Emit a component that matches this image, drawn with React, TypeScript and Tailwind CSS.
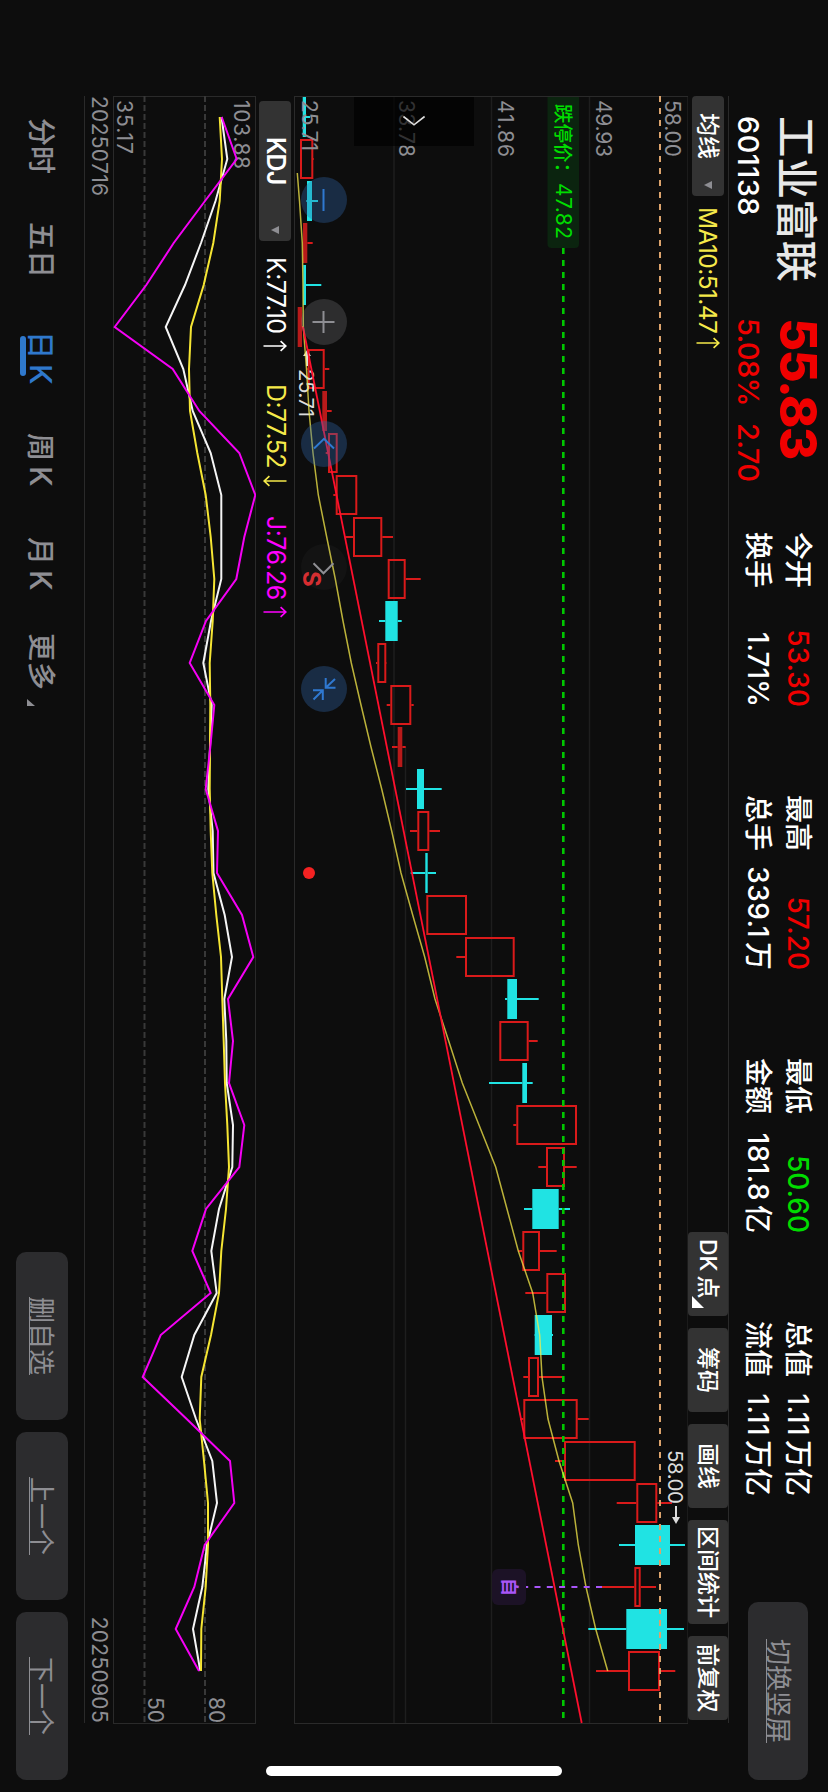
import React from "react";

type Candle = {
  kind: "up" | "down" | "flat";
  body: [number, number];
  wick: [number, number];
};

const STEP = 42;
const FIRST_X = 117;
const SCREEN_H = 828;

const candles: Candle[] = [
  { kind: "down", body: [302.7, 306], wick: [302.7, 310] },
  { kind: "up", body: [300, 313.3], wick: [300, 314] },
  { kind: "down", body: [307, 312], wick: [306.3, 318] },
  { kind: "flat", body: [303, 307.3], wick: [303, 312.7] },
  { kind: "down", body: [303.3, 306], wick: [303.3, 321.3] },
  { kind: "flat", body: [297.7, 302], wick: [297.7, 303] },
  { kind: "up", body: [307.7, 324.7], wick: [306.7, 329.3] },
  { kind: "flat", body: [322.3, 327], wick: [322.3, 331.7] },
  { kind: "up", body: [328, 337.7], wick: [325.7, 337.7] },
  { kind: "up", body: [335.7, 357.3], wick: [333.3, 357.3] },
  { kind: "up", body: [353, 382.3], wick: [345.3, 393] },
  { kind: "up", body: [387.7, 405.7], wick: [387.7, 420.7] },
  { kind: "down", body: [385.3, 397.7], wick: [379, 401.7] },
  { kind: "up", body: [377.3, 386.3], wick: [376, 386.7] },
  { kind: "up", body: [390.3, 411.3], wick: [386.7, 413.7] },
  { kind: "flat", body: [397.7, 402.3], wick: [392, 405.7] },
  { kind: "down", body: [417, 424], wick: [406, 441.7] },
  { kind: "up", body: [417.3, 429.3], wick: [410, 440] },
  { kind: "down", body: [425.3, 427.7], wick: [410.7, 436] },
  { kind: "up", body: [426.3, 467], wick: [426.3, 467] },
  { kind: "up", body: [465, 514.7], wick: [456.3, 514.7] },
  { kind: "down", body: [507.3, 517], wick: [505, 538.7] },
  { kind: "up", body: [499.3, 528.7], wick: [499.3, 537.7] },
  { kind: "down", body: [522.3, 527], wick: [489, 532.7] },
  { kind: "up", body: [516.3, 577], wick: [513.3, 577] },
  { kind: "up", body: [546, 565], wick: [538.3, 576.7] },
  { kind: "down", body: [532.3, 558.7], wick: [524, 570] },
  { kind: "up", body: [522.3, 540], wick: [518.3, 556.7] },
  { kind: "up", body: [546.3, 566], wick: [525.3, 566] },
  { kind: "down", body: [534.7, 552], wick: [534.3, 553] },
  { kind: "up", body: [528, 539], wick: [523.3, 563.3] },
  { kind: "up", body: [523.3, 577.7], wick: [520, 588.7] },
  { kind: "up", body: [564, 635.7], wick: [555, 635.7] },
  { kind: "up", body: [636.3, 657.3], wick: [616.7, 672] },
  { kind: "down", body: [635, 670], wick: [619, 685] },
  { kind: "up", body: [634.3, 640.7], wick: [601.7, 656] },
  { kind: "down", body: [626.3, 667], wick: [588.3, 684] },
  { kind: "up", body: [628, 660], wick: [596, 675.3] },
];

const ma10 = [
  299.5, 302.3, 303, 303.3, 306.5, 309, 313, 318.3, 326.7, 335.3, 343, 351.3, 361, 371, 381.7, 391.7, 401,
  412.7, 424.7, 435, 448.7, 462.3, 479, 495.7, 507, 518.3, 532.7, 539.7, 542, 548, 559, 572.7, 578.3, 586,
  595.7, 607.7,
];

const kLine = [
  221.5, 227.3, 215.5, 201, 185, 165.7, 183.3, 192.7, 210.7, 221.3, 221.3, 221.3, 211, 203.3, 211.7, 210,
  208.3, 212.7, 213.5, 224.7, 232, 224.3, 226.3, 226.7, 233, 232.3, 219, 211.3, 216.7, 194.3, 181.7, 196,
  212.3, 217, 207, 202.3, 193, 200.3,
];
const dLine = [
  219.7, 222, 219.7, 213.3, 203.7, 191, 189, 190, 197.3, 205.7, 210.7, 214.3, 212.7, 209.7, 210.3, 210,
  209.7, 210.7, 212.3, 216.3, 221, 222.3, 223.7, 225, 227.3, 229, 226, 221.3, 219, 211, 201.3, 199.7, 204,
  208, 208, 205.7, 201.3, 201,
];
const jLine = [
  221.7, 236.7, 205, 173.7, 146.3, 114.7, 172.7, 199.3, 239.3, 255.3, 244.3, 236.3, 206, 189.7, 214.3, 210.3,
  205.7, 218, 217, 242, 253.3, 228, 233, 229, 244.3, 239.3, 206, 192.3, 210.7, 160.7, 142.7, 186.7, 230,
  234.3, 204.7, 194.3, 175.7, 199,
];

const path = (values: number[], start = 0) =>
  values.map((v, i) => `${FIRST_X + STEP * (i + start)},${SCREEN_H - v}`).join(" ");

function CandleShape({ c, x }: { c: Candle; x: number }) {
  const color = c.kind === "down" ? "#20e3e3" : "#d91a1a";
  const top = SCREEN_H - c.body[1];
  const bottom = SCREEN_H - c.body[0];
  const high = SCREEN_H - c.wick[1];
  const low = SCREEN_H - c.wick[0];
  return (
    <g stroke={color} strokeWidth={2}>
      <line x1={x} x2={x} y1={high} y2={top} />
      <line x1={x} x2={x} y1={bottom} y2={low} />
      {c.kind === "up" ? (
        <rect x={x - 19} y={top + 1} width={38} height={bottom - top - 2} fill="none" />
      ) : (
        <rect
          x={x - 20}
          y={top}
          width={40}
          height={bottom - top}
          fill={c.kind === "flat" ? "#b81a1a" : color}
          stroke="none"
        />
      )}
    </g>
  );
}

function Arrow({ down = false, className }: { down?: boolean; className: string }) {
  return (
    <svg
      viewBox="0 0 12 24"
      className={`h-6 w-3 ${down ? "rotate-180" : ""} ${className}`}
      fill="none"
      stroke="currentColor"
      strokeWidth={1.7}
    >
      <path d="M6 23.5V1.2M1.2 6.4 6 1.2l4.8 5.2" />
    </svg>
  );
}

function Caret() {
  return (
    <svg viewBox="0 0 10 8" className="h-2 w-2.5 fill-[#8e8e93]">
      <path d="M1 0h8L5 8z" />
    </svg>
  );
}

function Stat({
  label,
  value,
  unit,
  color = "text-white",
}: {
  label: string;
  value: string;
  unit?: string;
  color?: string;
}) {
  return (
    <div className="flex h-10 items-center justify-between">
      <span className="text-[28px] font-medium">{label}</span>
      <span className={`flex text-[28px] font-medium ${color} ${unit ? "tracking-[0.4px]" : ""}`}>
        {value}
        {unit && <span className="ml-1 tracking-normal">{unit}</span>}
      </span>
    </div>
  );
}

function Header() {
  return (
    <header className="flex h-[99px] shrink-0 pl-[116px] leading-none text-white">
      <div className="flex w-[202px] flex-col pt-[9px]">
        <h1 className="h-[46px] text-[41.5px] leading-[46px] font-medium text-[#e8e8e8]">工业富联</h1>
        <span className="mt-[10px] text-[29px] leading-[30px] font-medium tracking-[0.4px]">601138</span>
      </div>
      <div className="flex w-[214px] flex-col pt-[5px] text-[#f00000]">
        <strong className="h-[50px] text-[51px] leading-[50px] font-extrabold tracking-[-1.7px]">55.83</strong>
        <div className="mt-[10px] flex gap-[17px] text-[29px] leading-[30px] font-medium tracking-[-0.6px]">
          <span>5.08%</span>
          <span>2.70</span>
        </div>
      </div>
      <div className="flex gap-[88px] pt-[10px]">
        <div className="w-[175px]">
          <Stat label="今开" value="53.30" color="text-[#f00000]" />
          <Stat label="换手" value="1.71%" />
        </div>
        <div className="w-[175px]">
          <Stat label="最高" value="57.20" color="text-[#f00000]" />
          <Stat label="总手" value="339.1" unit="万" />
        </div>
        <div className="w-[175px]">
          <Stat label="最低" value="50.60" color="text-[#00dc00]" />
          <Stat label="金额" value="181.8" unit="亿" />
        </div>
        <div className="w-[175px]">
          <Stat label="总值" value="1.11" unit="万亿" />
          <Stat label="流值" value="1.11" unit="万亿" />
        </div>
      </div>
      <button className="mt-5 mr-3 ml-auto h-[60px] w-[178px] rounded-[10px] bg-[#2c2c2e] text-[26px] text-[#8e8e93] underline decoration-1 underline-offset-2">
        切换竖屏
      </button>
    </header>
  );
}

function ToolButton({ children, className }: { children: React.ReactNode; className: string }) {
  return (
    <button className={`h-10 rounded-[4px] bg-[#333333] text-[23px] leading-10 font-medium text-white ${className}`}>
      {children}
    </button>
  );
}

function Toolbar() {
  return (
    <div className="mr-[69px] ml-24 flex h-[41px] shrink-0 items-center border-t border-[#2a2a2a]">
      <button className="flex h-8 w-[100px] items-center rounded-[4px] bg-[#333333] pr-1.5 pl-[17px] text-[23px] font-medium text-white">
        均线
        <span className="ml-auto">
          <Caret />
        </span>
      </button>
      <span className="ml-[11px] text-[24.5px] tracking-[-0.6px] text-[#f5e94a]">MA10:51.47</span>
      <Arrow className="ml-1 text-[#f5e94a]" />
      <div className="ml-auto flex gap-3 pr-[3px]">
        <ToolButton className="flex w-[84px] pl-[7px]">
          <span>DK</span>
          <span className="ml-1 -mr-0.5">点</span>
          <svg viewBox="0 0 12 12" className="mt-6 h-3 w-3 shrink-0 fill-white">
            <path d="M0 12h12V0z" />
          </svg>
        </ToolButton>
        <ToolButton className="w-[84px]">筹码</ToolButton>
        <ToolButton className="w-[84px]">画线</ToolButton>
        <ToolButton className="w-[104px]">区间统计</ToolButton>
        <ToolButton className="w-[84px]">前复权</ToolButton>
      </div>
    </div>
  );
}

const priceTicks: [string, number][] = [
  ["58.00", 163],
  ["49.93", 232],
  ["41.86", 330],
  ["33.78", 429],
  ["25.71", 526],
];

function ControlIcon({ d, className }: { d: string; className: string }) {
  return (
    <button className={`flex size-[46px] items-center justify-center rounded-full ${className}`}>
      <svg viewBox="-12 -12 24 24" className="size-6" fill="none" stroke="currentColor" strokeWidth={2}>
        <path d={d} />
      </svg>
    </button>
  );
}

function PriceChart() {
  return (
    <section className="relative ml-24 h-[394px] w-[1628px] shrink-0">
      <svg viewBox="96 140 1628 394" className="h-[394px] w-[1628px]">
        <g stroke="#1e1e1e" strokeWidth={1.5}>
          <line x1={96} x2={1723} y1={238.5} y2={238.5} />
          <line x1={96} x2={1723} y1={336.5} y2={336.5} />
          <line x1={96} x2={1723} y1={434} y2={434} />
          <line x1={747} x2={1723} y1={422.5} y2={422.5} />
        </g>
        <rect x={96.5} y={140} width={1627} height={393.5} fill="none" stroke="#2a2a2a" />
        {candles.map((c, i) => (
          <CandleShape key={i} c={c} x={FIRST_X + STEP * i} />
        ))}
        <g fill="#8e8e93" fontSize={21}>
          {priceTicks.map(([label, y]) => (
            <text key={label} x={100} y={y} textLength={label === "25.71" ? 51 : 57}>
              {label}
            </text>
          ))}
        </g>
        <g stroke="#dcdcdc" fill="#dcdcdc">
          <path d="M352 521h14" strokeWidth={2} />
          <path d="M350 521l6-4v8z" stroke="none" />
          <path d="M1506 152h12" strokeWidth={2} />
          <path d="M1524 152l-7-4v8z" stroke="none" />
        </g>
        <g fill="#dcdcdc" fontSize={20.5}>
          <text x={369} y={529} textLength={48}>25.71</text>
          <text x={1450} y={160} textLength={54}>58.00</text>
        </g>
        <line x1={96} x2={1723} y1={168} y2={168} stroke="#dca36c" strokeWidth={2} strokeDasharray="6 6" />
        <line x1={248} x2={1723} y1={264.7} y2={264.7} stroke="#00c800" strokeWidth={2.6} strokeDasharray="6 6" />
        <text x={571} y={525} fill="#d92b2e" fontSize={24} fontWeight={700}>S</text>
        <circle cx={873} cy={519} r={6} fill="#f42222" />
        <polyline points={`173,530.7 ${path(ma10, 2)}`} fill="none" stroke="#f5e94a" strokeOpacity={0.75} strokeWidth={1.5} />
        <line x1={327} y1={525} x2={1723} y2={246.3} stroke="#ff0f2d" strokeWidth={1.8} />
        <line x1={1587} x2={1587} y1={226} y2={302} stroke="#a855f7" strokeWidth={2} strokeDasharray="6 6.3" />
        <rect x={1569} y={302} width={36} height={34} rx={6} fill="#1c1226" />
        <text x={1578} y={325.5} fill="#a855f7" fontSize={18} fontWeight={700}>自</text>
        <path d="M97 249h147a4 4 0 0 1 4 4v23.500a4 4 0 0 1-4 4H97z" fill="#0b240f" />
        <g fill="#00dc00">
          <text x={104} y={272} fontSize={19.500} fontWeight={500}>跌停价：</text>
          <text x={183} y={272.5} fontSize={21} textLength={56}>47.82</text>
        </g>
      </svg>
      <div className="absolute top-[214px] left-px flex h-[120px] w-[49px] items-center justify-center bg-black/65">
        <svg viewBox="0 0 12 24" className="mr-[2px] h-6 w-3" fill="none" stroke="#dddddd" strokeWidth={1.6}>
          <path d="M1.500 1.400 9.800 12l-8.300 10.600" />
        </svg>
      </div>
      <div className="absolute top-[341px] left-[81px] flex gap-[76.2px]">
        <ControlIcon className="bg-[#3166ab]/35 text-[#2f78d0]" d="M-11 .5H11" />
        <ControlIcon className="bg-[#8e8e93]/25 text-[#8e8e93]" d="M-11 .5H11M0-10.500V11.500" />
        <ControlIcon className="bg-[#3166ab]/35 text-[#2f78d0]" d="M4.500-10-5.200 0 4.500 10" />
        <ControlIcon className="bg-[#8e8e93]/5 text-[#8e8e93]" d="M-3.700-9.500 6.300.5-3.700 10.500" />
        <ControlIcon
          className="bg-[#3166ab]/35 text-[#2f78d0]"
          d="M-11-1.700H-1.300V-11.500M-1.300-1.700-10-11M11 1.200H1.200V11M1.200 1.200 10.500 10.500"
        />
      </div>
    </section>
  );
}

function IndicatorBar() {
  return (
    <div className="ml-[101px] flex h-[38px] shrink-0 items-center text-[25px] tracking-[-0.6px]">
      <button className="flex h-8 w-[140px] items-center rounded-[4px] bg-[#333333] pr-1.5 pl-9 font-semibold tracking-[-1px] text-white">
        KDJ
        <span className="ml-auto">
          <Caret />
        </span>
      </button>
      <div className="ml-4 flex w-[127px] items-center text-white">
        <span>K:77.10</span>
        <Arrow className="ml-[7px]" />
      </div>
      <div className="flex w-[132px] items-center text-[#f5e94a]">
        <span>D:77.52</span>
        <Arrow down className="ml-[7px]" />
      </div>
      <div className="flex items-center text-[#ff00ff]">
        <span>J:76.26</span>
        <Arrow className="ml-[6px]" />
      </div>
    </div>
  );
}

function KdjChart() {
  return (
    <section className="ml-24 shrink-0">
      <svg viewBox="96 572 1628 143" className="h-[143px] w-[1628px]">
        <rect x={96.5} y={572.5} width={1627} height={142} fill="none" stroke="#2a2a2a" />
        <g stroke="#383838" strokeWidth={2} strokeDasharray="6 3">
          <line x1={96} x2={1723} y1={623} y2={623} />
          <line x1={96} x2={1723} y1={683.5} y2={683.5} />
        </g>
        <g fill="#8e8e93" fontSize={21}>
          <text x={100} y={594} textLength={69}>103.88</text>
          <text x={100} y={711} textLength={54}>35.17</text>
          <text x={1697} y={619}>80</text>
          <text x={1697} y={680}>50</text>
        </g>
        <g fill="none" strokeWidth={2}>
          <polyline points={path(kLine)} stroke="#f5f5f5" />
          <polyline points={path(dLine)} stroke="#f5e533" />
          <polyline points={path(jLine)} stroke="#f500f5" />
        </g>
      </svg>
    </section>
  );
}

function KTab({ period }: { period: string }) {
  return (
    <>
      {period}
      <span className="ml-[5px] text-[30px]">K</span>
    </>
  );
}

function Footer() {
  const tab = "text-[28px] font-medium";
  return (
    <footer className="flex h-[84px] shrink-0 pl-[118px] text-[#8e8e93]">
      <nav className="flex pt-[22px] leading-[42px]">
        <span className={`${tab} w-[104px]`}>分时</span>
        <span className={`${tab} w-[109px]`}>五日</span>
        <span className={`${tab} relative w-[102px] text-[#2f78cc]`}>
          <KTab period="日" />
          <i className="absolute top-[36px] left-[5px] h-1.5 w-10 rounded-full bg-[#2f78cc]" />
        </span>
        <span className={`${tab} w-[104px]`}>
          <KTab period="周" />
        </span>
        <span className={`${tab} w-[96px]`}>
          <KTab period="月" />
        </span>
        <span className={`${tab} tracking-[1px]`}>更多</span>
        <svg viewBox="0 0 8 8" className="mt-[27px] ml-2 size-2 fill-[#8e8e93]">
          <path d="M0 8h7V0z" />
        </svg>
      </nav>
      <div className="mr-3 ml-auto flex gap-3 pt-4">
        {["删自选", "上一个", "下一个"].map((label) => (
          <button
            key={label}
            className="h-[52px] w-[168px] rounded-[10px] bg-[#2c2c2e] text-[26px] underline decoration-1 underline-offset-2"
          >
            {label}
          </button>
        ))}
      </div>
    </footer>
  );
}

export default function App() {
  return (
    <div className="relative h-[1792px] w-[828px] overflow-hidden bg-[#0d0d0d]">
      <main className="flex h-[828px] w-[1792px] origin-top-left [transform:rotate(90deg)_translateY(-828px)] flex-col bg-[#0d0d0d] font-['Inter','Noto_Sans_CJK_SC',sans-serif]">
        <Header />
        <Toolbar />
        <PriceChart />
        <IndicatorBar />
        <KdjChart />
        <div className="mr-[69px] ml-24 flex h-[29px] shrink-0 items-center justify-between border-b border-[#2a2a2a] pb-px text-[21px] leading-none tracking-[0.3px] text-[#8e8e93]">
          <span>20250716</span>
          <span>20250905</span>
        </div>
        <Footer />
      </main>
      <div className="absolute top-[1766px] left-[266px] h-[10px] w-[296px] rounded-full bg-white" />
    </div>
  );
}
